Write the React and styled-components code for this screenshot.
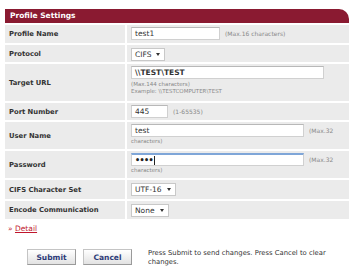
import React from "react";
import styled, { createGlobalStyle } from "styled-components";

const GlobalStyle = createGlobalStyle`
  html, body {
    margin: 0;
    padding: 0;
    background: #fff;
  }
  body {
    font-family: "DejaVu Sans", Verdana, sans-serif;
    color: #333;
  }
`;

const Page = styled.div`
  width: 351px;
  height: 276px;
  padding: 9px 2px 0 5px;
  box-sizing: border-box;
  overflow: hidden;
`;

const Header = styled.div`
  height: 14px;
  background: #8a1a31;
  border-top-right-radius: 10px;
  color: #fff;
  font-weight: bold;
  font-size: 7.5px;
  line-height: 14px;
  padding-left: 5px;
`;

const Grid = styled.div`
  display: grid;
  grid-template-columns: 120px 1fr;
  gap: 2px;
  margin-top: 2px;
`;

const Label = styled.div`
  background: #ebebeb;
  font-weight: bold;
  font-size: 6.8px;
  color: #333;
  display: flex;
  align-items: center;
  padding-left: 4px;
  height: ${(p) => p.h}px;
`;

const Value = styled.div`
  background: #ebebeb;
  padding: 2px 0 0 4px;
  height: ${(p) => p.h}px;
  box-sizing: border-box;
  font-size: 6px;
  color: #888;
`;

const Line = styled.div`
  display: flex;
  align-items: center;
  gap: 5px;
`;

const Input = styled.div`
  width: ${(p) => p.w}px;
  height: 13px;
  box-sizing: border-box;
  background: #fff;
  border: 1px solid #d0d0d0;
  border-top-color: ${(p) => (p.focus ? "#7fa6d8" : "#b8b8b8")};
  border-top-width: ${(p) => (p.focus ? 2 : 1)}px;
  font-size: 7.5px;
  font-weight: ${(p) => (p.bold ? "bold" : "normal")};
  color: #333;
  line-height: 11px;
  padding-left: 3px;
  display: flex;
  align-items: center;
`;

const Select = styled.div`
  height: 13px;
  box-sizing: border-box;
  background: #fff;
  border: 1px solid #c8c8c8;
  font-size: 7.5px;
  color: #333;
  display: inline-flex;
  align-items: center;
  gap: 5px;
  padding: 0 4px 0 3px;
  margin-top: 1px;
`;

const Arrow = styled.span`
  width: 0;
  height: 0;
  border-left: 2.5px solid transparent;
  border-right: 2.5px solid transparent;
  border-top: 3px solid #333;
`;

const Hint = styled.span`
  font-size: 6px;
  color: #888;
  white-space: nowrap;
`;

const Note = styled.div`
  font-size: 5.5px;
  color: #888;
  line-height: 7px;
  margin-top: ${(p) => p.mt || 0}px;
`;

const Dots = styled.span`
  font-size: 8px;
  font-weight: bold;
  letter-spacing: -0.6px;
  color: #222;
`;

const Caret = styled.span`
  display: inline-block;
  width: 1px;
  height: 9px;
  background: #222;
  margin-left: 1px;
`;

const DetailLink = styled.div`
  margin: 5px 0 0 3px;
  font-size: 7.5px;
  color: #c0162c;
  span {
    text-decoration: underline;
  }
`;

const Footer = styled.div`
  display: flex;
  align-items: flex-start;
  margin-top: 16px;
  padding-left: 22px;
`;

const Buttons = styled.div`
  display: flex;
  gap: 7px;
`;

const Button = styled.div`
  width: 49px;
  height: 16px;
  box-sizing: border-box;
  border: 1px solid #c4c4c4;
  border-right-color: #9a9a9a;
  border-bottom-color: #9a9a9a;
  background: linear-gradient(#ffffff, #e2e2e2);
  color: #2d3a78;
  font-size: 7.5px;
  font-weight: bold;
  display: flex;
  align-items: center;
  justify-content: center;
`;

const FooterText = styled.div`
  margin-left: 16px;
  margin-top: 0;
  font-size: 6.8px;
  line-height: 9px;
  color: #333;
  width: 200px;
`;

const rows = [
  { label: "Profile Name", h: 18 },
  { label: "Protocol", h: 17 },
  { label: "Target URL", h: 37 },
  { label: "Port Number", h: 17 },
  { label: "User Name", h: 27 },
  { label: "Password", h: 27 },
  { label: "CIFS Character Set", h: 19 },
  { label: "Encode Communication", h: 18 },
];

const App = () => {
  const values = [
    <Line>
      <Input w={89}>test1</Input>
      <Hint>(Max.16 characters)</Hint>
    </Line>,
    <Select>
      CIFS <Arrow />
    </Select>,
    <>
      <Input w={193} bold>
        \\TEST\TEST
      </Input>
      <Note mt={2}>(Max.144 characters)</Note>
      <Note>Example: \\TESTCOMPUTER\TEST</Note>
    </>,
    <Line>
      <Input w={37}>445</Input>
      <Hint>(1-65535)</Hint>
    </Line>,
    <>
      <Line>
        <Input w={173}>test</Input>
        <Hint>(Max.32</Hint>
      </Line>
      <Note mt={1}>characters)</Note>
    </>,
    <>
      <Line>
        <Input w={173} focus>
          <Dots>••••</Dots>
          <Caret />
        </Input>
        <Hint>(Max.32</Hint>
      </Line>
      <Note mt={1}>characters)</Note>
    </>,
    <Select>
      UTF-16 <Arrow />
    </Select>,
    <Select>
      None <Arrow />
    </Select>,
  ];

  return (
    <Page>
      <GlobalStyle />
      <Header>Profile Settings</Header>
      <Grid>
        {rows.map((r, i) => (
          <React.Fragment key={r.label}>
            <Label h={r.h}>{r.label}</Label>
            <Value h={r.h}>{values[i]}</Value>
          </React.Fragment>
        ))}
      </Grid>
      <DetailLink>
        » <span>Detail</span>
      </DetailLink>
      <Footer>
        <Buttons>
          <Button>Submit</Button>
          <Button>Cancel</Button>
        </Buttons>
        <FooterText>
          Press Submit to send changes. Press Cancel to clear changes.
        </FooterText>
      </Footer>
    </Page>
  );
};

export default App;
